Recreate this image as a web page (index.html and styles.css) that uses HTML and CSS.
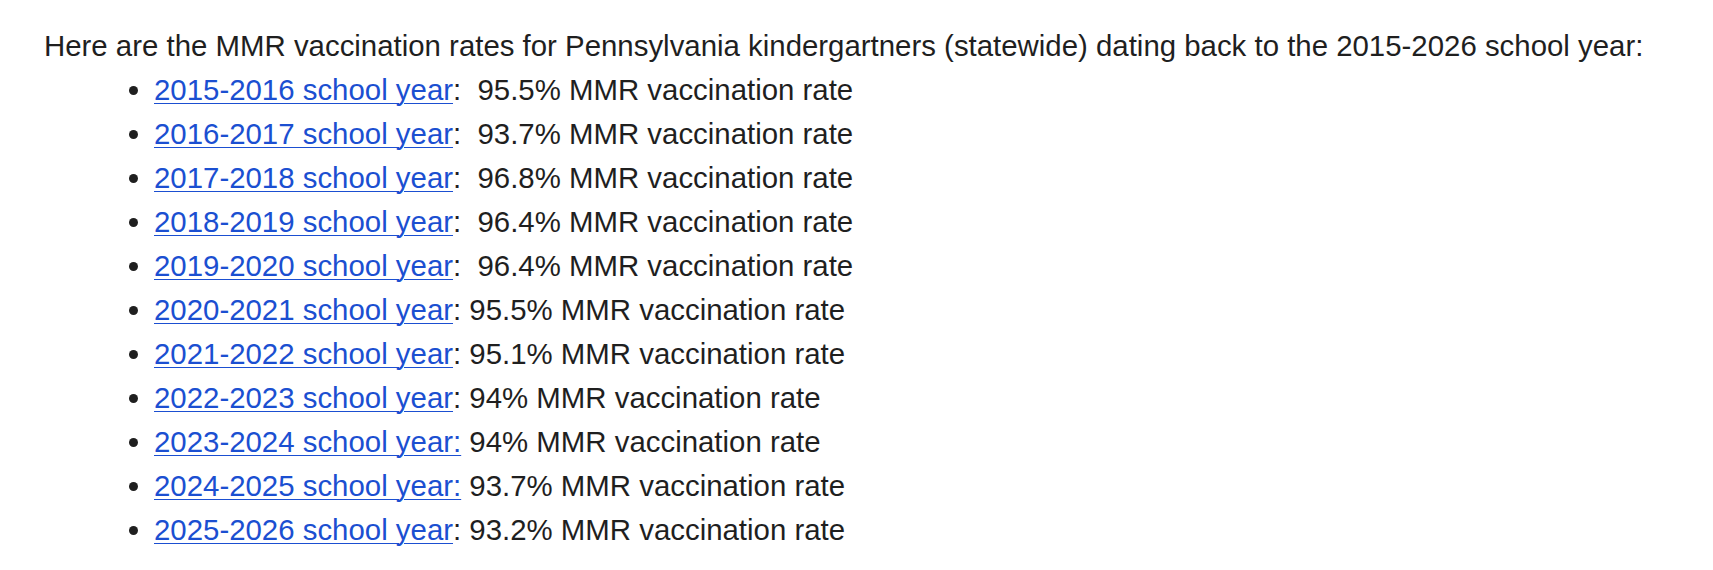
FILE: index.html
```html
<!DOCTYPE html>
<html lang="en">
<head>
<meta charset="utf-8">
<title>MMR vaccination rates</title>
<link rel="stylesheet" href="styles.css">
</head>
<body>
<div class="content">
  <p class="intro">Here are the MMR vaccination rates for Pennsylvania kindergartners (statewide) dating back to the 2015-2026 school year:</p>
  <ul class="rates">
    <li><a href="#">2015-2016 school year</a>:&nbsp; 95.5% MMR vaccination rate</li>
    <li><a href="#">2016-2017 school year</a>:&nbsp; 93.7% MMR vaccination rate</li>
    <li><a href="#">2017-2018 school year</a>:&nbsp; 96.8% MMR vaccination rate</li>
    <li><a href="#">2018-2019 school year</a>:&nbsp; 96.4% MMR vaccination rate</li>
    <li><a href="#">2019-2020 school year</a>:&nbsp; 96.4% MMR vaccination rate</li>
    <li><a href="#">2020-2021 school year</a>: 95.5% MMR vaccination rate</li>
    <li><a href="#">2021-2022 school year</a>: 95.1% MMR vaccination rate</li>
    <li><a href="#">2022-2023 school year</a>: 94% MMR vaccination rate</li>
    <li><a href="#">2023-2024 school year:</a> 94% MMR vaccination rate</li>
    <li><a href="#">2024-2025 school year:</a> 93.7% MMR vaccination rate</li>
    <li><a href="#">2025-2026 school year</a>: 93.2% MMR vaccination rate</li>
  </ul>
</div>
</body>
</html>
```

FILE: styles.css
```css
html, body {
  margin: 0;
  padding: 0;
  background: #ffffff;
}

.content {
  padding: 24px 0 0 44px;
  font-family: "Liberation Sans", Arial, Helvetica, sans-serif;
  font-size: 29.4px;
  line-height: 44px;
  color: #1f1f1f;
}

.intro {
  margin: 0;
}

.rates {
  margin: 0;
  padding: 0 0 0 110px;
  list-style: disc;
}

.rates a {
  color: #1b4fd1;
  text-decoration: underline;
  text-decoration-thickness: 1px;
  text-underline-offset: 3px;
}
```
